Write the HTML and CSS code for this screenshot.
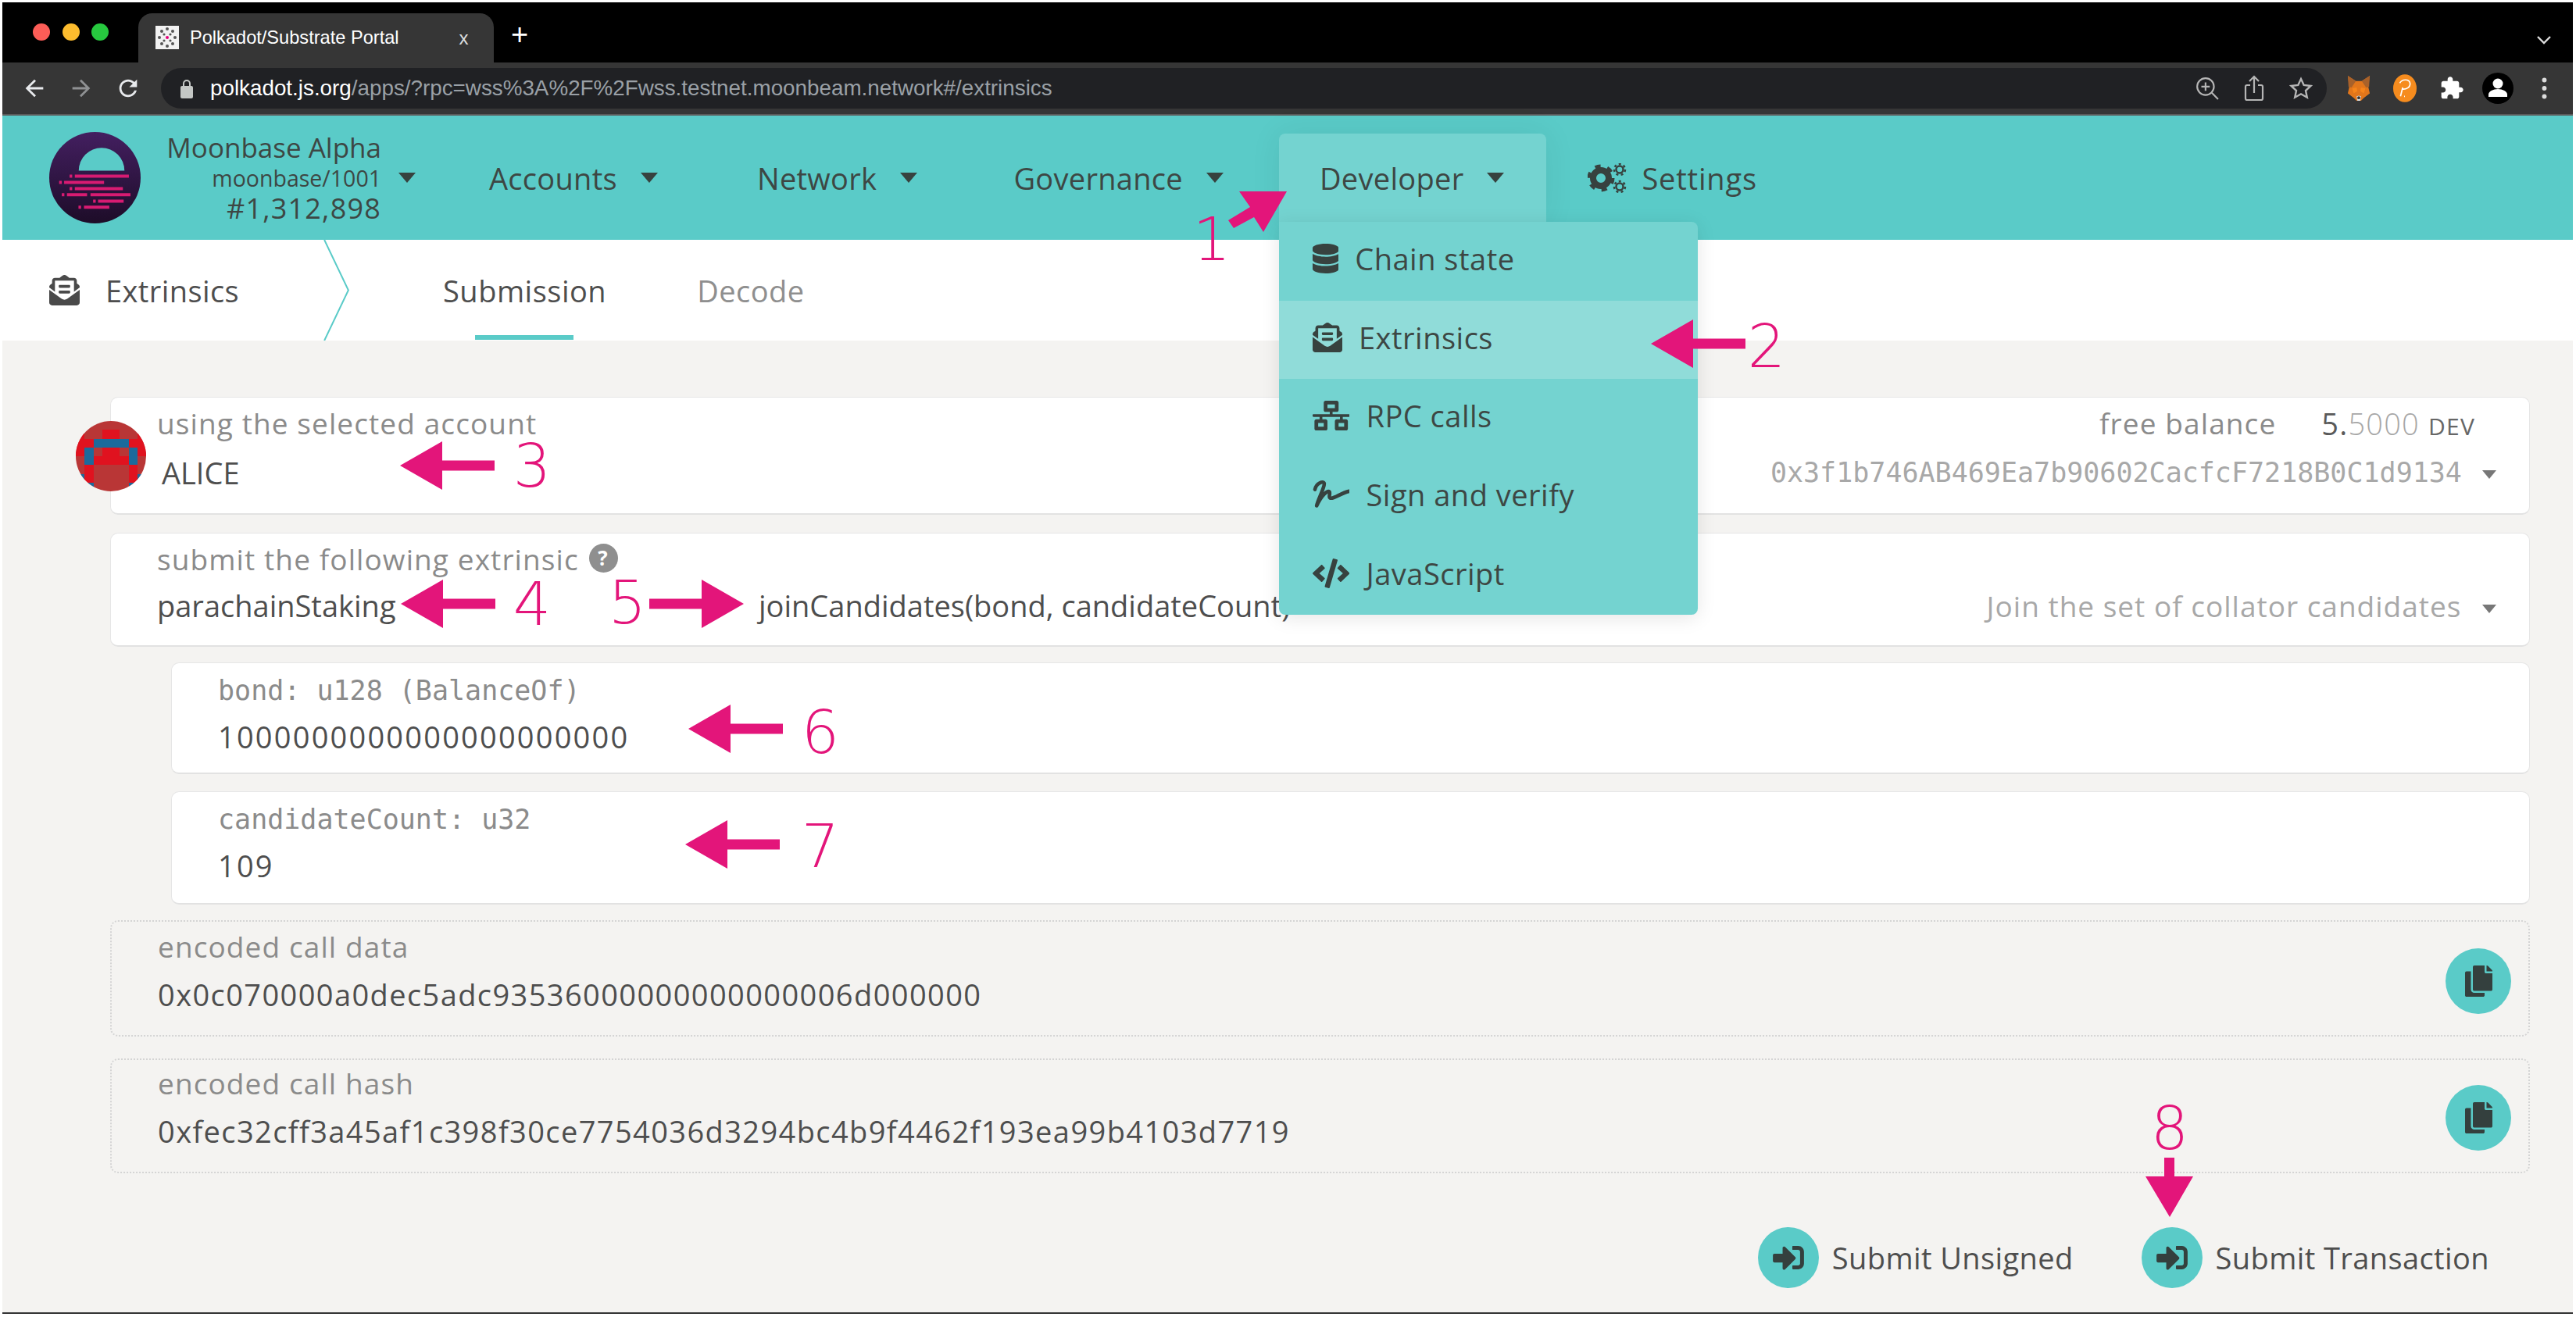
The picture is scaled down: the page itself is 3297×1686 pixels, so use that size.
FILE: index.html
```html
<!DOCTYPE html>
<html>
<head>
    <title>Polkadot/Substrate Portal</title>
    <link rel="stylesheet" href="styles.css">
</head>
<body>
    <div class="window">
        <!-- browser tabs -->
        <div class="tabstrip">
            <div class="lights">
                <span class="light red"></span>
                <span class="light yellow"></span>
                <span class="light green"></span>
            </div>
            <div class="tab">
                <svg class="favicon" viewBox="0 0 30 30">
                    <rect width="30" height="30" fill="#f2f2f2"/>
                    <g fill="#555">
                        <circle cx="15" cy="4" r="2"/><circle cx="15" cy="26" r="2"/>
                        <circle cx="8" cy="7" r="2"/><circle cx="22" cy="7" r="2"/>
                        <circle cx="8" cy="23" r="2"/><circle cx="22" cy="23" r="2"/>
                        <circle cx="5" cy="15" r="2"/><circle cx="25" cy="15" r="2"/>
                        <circle cx="11" cy="11" r="1.6"/><circle cx="19" cy="11" r="1.6"/>
                        <circle cx="11" cy="19" r="1.6"/><circle cx="19" cy="19" r="1.6"/>
                    </g>
                    <circle cx="15" cy="15" r="2" fill="#e6007a"/>
                </svg>
                <span class="tab-title">Polkadot/Substrate Portal</span>
                <span class="tab-close">x</span>
            </div>
            <span class="new-tab">+</span>
            <svg class="tab-list" viewBox="0 0 20 12"><path d="M2 2l8 8 8-8" fill="none" stroke="#ddd" stroke-width="2.4"/></svg>
        </div>

        <!-- browser toolbar -->
        <div class="toolbar">
            <svg class="tool" viewBox="0 0 24 24"><path fill="#e8eaed" d="M20 11H7.83l5.59-5.59L12 4l-8 8 8 8 1.41-1.41L7.83 13H20v-2z"/></svg>
            <svg class="tool" viewBox="0 0 24 24"><path fill="#8f9193" d="M4 11h12.17l-5.59-5.59L12 4l8 8-8 8-1.41-1.41L16.17 13H4v-2z"/></svg>
            <svg class="tool" viewBox="0 0 24 24"><path fill="#e8eaed" d="M17.65 6.35C16.2 4.9 14.21 4 12 4c-4.42 0-7.99 3.58-7.99 8s3.57 8 7.99 8c3.73 0 6.84-2.55 7.73-6h-2.08c-.82 2.33-3.04 4-5.65 4-3.31 0-6-2.69-6-6s2.69-6 6-6c1.66 0 3.14.69 4.22 1.78L13 11h7V4l-2.35 2.35z"/></svg>
            <div class="address">
                <svg class="lock" viewBox="0 0 16 26"><path d="M4 11V7a4 4 0 0 1 8 0v4" fill="none" stroke="#c4c7c5" stroke-width="2"/><rect y="10" width="16" height="16" rx="2" fill="#c4c7c5"/></svg>
                <span class="url"><b>polkadot.js.org</b>/apps/?rpc=wss%3A%2F%2Fwss.testnet.moonbeam.network#/extrinsics</span>
                <div class="address-icons">
                    <svg class="addr-icon" viewBox="0 0 28 28"><g fill="none" stroke="#b5b5b5" stroke-width="2"><circle cx="12" cy="12" r="10"/><path d="M12 7v10M7 12h10M19 19l8 8"/></g></svg>
                    <svg class="addr-icon" viewBox="0 0 28 36"><g fill="none" stroke="#b5b5b5" stroke-width="2.2"><path d="M9 14H5a2 2 0 0 0-2 2v15a2 2 0 0 0 2 2h18a2 2 0 0 0 2-2V16a2 2 0 0 0-2-2h-4"/><path d="M14 24V3M8 9l6-6 6 6"/></g></svg>
                    <svg class="addr-icon" viewBox="0 0 30 30"><path d="M15 3l3.7 8 8.8 1-6.500 6 1.800 8.700L15 22.300l-7.800 4.400L9 18l-6.500-6 8.800-1z" fill="none" stroke="#b5b5b5" stroke-width="2.400"/></svg>
                </div>
            </div>
            <div class="ext-icons">
                <span class="ext-slot">
                    <svg class="ext-fox" viewBox="0 0 32 36">
                        <path d="M1 1l11 7h8l11-7-2 15 2 9-8 6-4 4h-6l-4-4-8-6 2-9z" fill="#e2761b"/>
                        <path d="M1 1l11 7-6 9-4-1zM31 1L20 8l6 9 4-1z" fill="#a8612a"/>
                        <path d="M7 18l6-1 1 5-5 3zM25 18l-6-1-1 5 5 3z" fill="#f6851b"/>
                        <path d="M13 29l3-1 3 1-1 6h-4z" fill="#ddd"/>
                        <circle cx="16" cy="31" r="2" fill="#333"/>
                    </svg>
                </span>
                <span class="ext-slot">
                    <svg class="ext-dot" viewBox="0 0 32 38">
                        <ellipse cx="16" cy="19" rx="16" ry="19" fill="#f68c1e"/>
                        <path d="M10 30l3-12M9 12c3-6 13-6 14 0s-6 9-11 8M15 30h1" fill="none" stroke="#fff" stroke-width="1.800"/>
                    </svg>
                </span>
                <span class="ext-slot">
                    <svg class="ext-puzzle" viewBox="0 0 24 24"><path fill="#fff" d="M20.500 11H19V7c0-1.100-.9-2-2-2h-4V3.500C13 2.120 11.880 1 10.500 1S8 2.120 8 3.500V5H4c-1.100 0-1.990.9-1.990 2v3.800H3.500c1.490 0 2.700 1.210 2.700 2.700s-1.210 2.700-2.700 2.700H2V20c0 1.100.9 2 2 2h3.800v-1.500c0-1.490 1.210-2.700 2.700-2.700 1.490 0 2.700 1.210 2.700 2.700V22H17c1.100 0 2-.9 2-2v-4h1.500c1.380 0 2.500-1.120 2.500-2.500S21.880 11 20.500 11z"/></svg>
                </span>
                <span class="ext-slot">
                    <svg class="ext-profile" viewBox="0 0 40 40">
                        <circle cx="20" cy="20" r="20" fill="#000"/>
                        <circle cx="20" cy="14" r="6.500" fill="#fff"/>
                        <path d="M8 31v-3c0-4 6-7 12-7s12 3 12 7v3z" fill="#fff"/>
                    </svg>
                </span>
                <span class="ext-slot">
                    <svg class="ext-menu" viewBox="0 0 6 24"><circle cx="3" cy="3" r="2.500" fill="#ddd"/><circle cx="3" cy="12" r="2.500" fill="#ddd"/><circle cx="3" cy="21" r="2.500" fill="#ddd"/></svg>
                </span>
            </div>
        </div>

        <!-- app header -->
        <div class="topbar">
            <svg class="chain-logo" viewBox="70 57 350 350">
                <defs>
                    <linearGradient id="logoFill" x1="0" y1="0" x2="0" y2="1">
                        <stop offset="0" stop-color="#431f60"/>
                        <stop offset="1" stop-color="#1d0c28"/>
                    </linearGradient>
                </defs>
                <circle cx="245" cy="232" r="175" fill="url(#logoFill)"/>
                <path d="M183 205a87.500 87.500 0 0 1 175 0z" fill="#5acbc8"/>
                <g stroke="#d81b72" stroke-width="12" stroke-linecap="butt">
                    <path d="M168 226h207M148 226h10M127 250h153M108 250h10M168 274h184M148 274h10M138 297h77M118 297h10M228 297h153M257 322h98M238 322h10M203 345h97M182 345h10"/>
                </g>
            </svg>
            <div class="chain-info">
                <div class="chain-name">Moonbase Alpha</div>
                <div class="chain-spec">moonbase/1001</div>
                <div class="chain-block">#1,312,898</div>
            </div>
            <span class="caret chain-caret"></span>
            <nav class="nav">
                <div class="nav-item">Accounts <span class="caret"></span></div>
                <div class="nav-item">Network <span class="caret"></span></div>
                <div class="nav-item">Governance <span class="caret"></span></div>
                <div class="nav-item active">
                    Developer <span class="caret"></span>
                    <!-- выпадающее меню -->
                    <div class="dropdown">
                        <div class="dropdown-row">
                            <svg class="menu-icon" viewBox="0 0 448 512"><path d="M448 73.143v45.714C448 159.143 347.667 192 224 192S0 159.143 0 118.857V73.143C0 32.857 100.333 0 224 0s224 32.857 224 73.143zM448 176v102.857C448 319.143 347.667 352 224 352S0 319.143 0 278.857V176c48.125 33.143 136.208 48.572 224 48.572S399.874 209.143 448 176zm0 160v102.857C448 479.143 347.667 512 224 512S0 479.143 0 438.857V336c48.125 33.143 136.208 48.572 224 48.572S399.874 369.143 448 336z"/></svg>
                            Chain state
                        </div>
                        <div class="dropdown-row selected">
                            <svg class="menu-icon" viewBox="0 0 512 512"><use href="#envelope"/></svg>
                            Extrinsics
                        </div>
                        <div class="dropdown-row">
                            <svg class="menu-icon" viewBox="0 0 640 512"><path d="M640 264v-16c0-8.840-7.160-16-16-16H344v-40h72c17.670 0 32-14.330 32-32V32c0-17.670-14.330-32-32-32H224c-17.670 0-32 14.330-32 32v128c0 17.670 14.330 32 32 32h72v40H16c-8.840 0-16 7.160-16 16v16c0 8.840 7.160 16 16 16h104v40H64c-17.670 0-32 14.330-32 32v128c0 17.670 14.330 32 32 32h160c17.670 0 32-14.330 32-32V352c0-17.670-14.330-32-32-32h-56v-40h304v40h-56c-17.670 0-32 14.330-32 32v128c0 17.670 14.330 32 32 32h160c17.670 0 32-14.330 32-32V352c0-17.670-14.330-32-32-32h-56v-40h104c8.840 0 16-7.160 16-16zM256 128V64h128v64H256zm-64 320H96v-64h96v64zm352 0h-96v-64h96v64z"/></svg>
                            RPC calls
                        </div>
                        <div class="dropdown-row">
                            <svg class="menu-icon" viewBox="0 0 640 512"><path d="M40 170C60 60 190 10 200 70c8 60-110 280-130 380 90-190 190-270 220-240 20 30-30 110 30 110 70 0 170-90 310-120" fill="none" stroke="#37423f" stroke-width="62" stroke-linecap="round" stroke-linejoin="round"/></svg>
                            Sign and verify
                        </div>
                        <div class="dropdown-row">
                            <svg class="menu-icon" viewBox="0 0 640 512"><path d="M278.900 511.500l-61-17.700c-6.400-1.800-10-8.500-8.200-14.900L346.200 8.700c1.800-6.400 8.500-10 14.900-8.200l61 17.700c6.400 1.800 10 8.500 8.200 14.900L293.800 503.300c-1.900 6.400-8.500 10.100-14.900 8.200zm-114-112.200l43.500-46.400c4.600-4.900 4.300-12.700-.8-17.200L117 256l90.600-79.700c5.100-4.500 5.500-12.300.8-17.200l-43.500-46.400c-4.500-4.800-12.100-5.100-17-.5L3.800 247.200c-5.100 4.700-5.100 12.800 0 17.500l144.100 135.100c4.900 4.600 12.500 4.400 17-.5zm327.200.6l144.100-135.100c5.100-4.700 5.100-12.800 0-17.500L492.100 112.100c-4.800-4.500-12.400-4.300-17 .5L431.600 159c-4.600 4.900-4.300 12.700.8 17.200L523 256l-90.600 79.700c-5.100 4.500-5.500 12.300-.8 17.200l43.500 46.400c4.500 4.900 12.100 5.100 17 .6z"/></svg>
                            JavaScript
                        </div>
                    </div>
                </div>
                <div class="nav-item settings">
                    <svg class="cogs" viewBox="0 0 50 38">
                        <g fill="none" stroke="#37423f">
                            <circle cx="17" cy="19" r="10" stroke-width="8"/>
                            <circle cx="17" cy="19" r="15" stroke-width="5" stroke-dasharray="7 8.700"/>
                            <circle cx="41" cy="8" r="4.500" stroke-width="2.500"/>
                            <circle cx="41" cy="8" r="7" stroke-width="2.500" stroke-dasharray="3 3.300"/>
                            <circle cx="41" cy="30" r="4.500" stroke-width="2.500"/>
                            <circle cx="41" cy="30" r="7" stroke-width="2.500" stroke-dasharray="3 3.300"/>
                        </g>
                    </svg>
                    Settings
                </div>
            </nav>
        </div>

        <!-- sub navigation -->
        <div class="subnav">
            <div class="subnav-title">
                <svg class="title-icon" viewBox="0 0 512 512">
                    <defs>
                        <path id="envelope" d="M176 216h160c8.840 0 16-7.160 16-16v-16c0-8.840-7.160-16-16-16H176c-8.840 0-16 7.160-16 16v16c0 8.840 7.160 16 16 16zm-16 80c0 8.840 7.160 16 16 16h160c8.840 0 16-7.160 16-16v-16c0-8.840-7.160-16-16-16H176c-8.840 0-16 7.160-16 16v16zm96 121.130c-16.420 0-32.840-5.060-46.860-15.190L0 250.860V464c0 26.510 21.490 48 48 48h416c26.510 0 48-21.490 48-48V250.860L302.860 401.940c-14.020 10.120-30.440 15.190-46.860 15.190zm237.610-254.180c-8.850-6.940-17.240-13.470-29.610-22.810V96c0-26.510-21.490-48-48-48h-77.550c-3.040-2.200-5.870-4.260-9.040-6.560C312.600 29.170 279.200-.35 256 0c-23.200-.35-56.590 29.170-73.410 41.440-3.170 2.300-6 4.360-9.040 6.560H96c-26.510 0-48 21.490-48 48v44.140c-12.370 9.330-20.760 15.870-29.610 22.810A47.995 47.995 0 0 0 0 200.720v10.650l96 69.350V96h320v184.720l96-69.350v-10.650c0-14.740-6.780-28.670-18.390-37.770z"/>
                    </defs>
                    <use href="#envelope"/>
                </svg>
                Extrinsics
            </div>
            <svg class="crumb" viewBox="0 0 34 130"><path d="M1 0l31 65L1 130" fill="none" stroke="#5acbc8" stroke-width="2"/></svg>
            <div class="subnav-tab current">Submission</div>
            <div class="subnav-tab">Decode</div>
        </div>

        <!-- main form -->
        <div class="content">
            <div class="card account-card">
                <svg class="avatar" viewBox="0 0 8 8" shape-rendering="crispEdges">
                    <rect width="8" height="8" fill="#b93636"/>
                    <path fill="#e0121f" d="M0 1h1v1H0zM3 1h2v1H3zM7 1h1v1H7zM0 2h2v1H0zM6 2h2v1H6zM0 3h1v1H0zM3 3h2v1H3zM7 3h1v1H7zM2 4h4v1H2zM1 5h1v2H1zM6 5h1v2H6z"/>
                    <path fill="#1c6a9c" d="M2 2h4v1H2zM1 3h1v2H1zM6 3h1v2H6zM0 6h1v1H0zM7 6h1v1H7zM0 7h2v1H0zM6 7h2v1H6z"/>
                </svg>
                <div class="card-row">
                    <span class="label">using the selected account</span>
                    <span class="balance"><span class="label">free balance</span><span class="amount">5.<i>5000</i> <small>DEV</small></span></span>
                </div>
                <div class="card-row value-row">
                    <span class="value alice">ALICE</span>
                    <span class="hint mono">0x3f1b746AB469Ea7b90602CacfcF7218B0C1d9134 <span class="caret small"></span></span>
                </div>
            </div>

            <div class="card extrinsic-card">
                <div class="card-row">
                    <span class="label">submit the following extrinsic <span class="help">?</span></span>
                </div>
                <div class="card-row value-row">
                    <span class="value"><span class="section">parachainStaking</span><span class="method">joinCandidates(bond, candidateCount)</span></span>
                    <span class="hint">Join the set of collator candidates <span class="caret small"></span></span>
                </div>
            </div>

            <div class="card param-card">
                <div class="mono-label">bond: u128 (BalanceOf)</div>
                <div class="value digits">1000000000000000000000</div>
            </div>

            <div class="card param-card second">
                <div class="mono-label">candidateCount: u32</div>
                <div class="value digits">109</div>
            </div>

            <div class="output">
                <div>
                    <div class="label">encoded call data</div>
                    <div class="value output-value">0x0c070000a0dec5adc93536000000000000006d000000</div>
                </div>
                <span class="round copy"><svg class="copy-icon" viewBox="0 0 448 512"><use href="#copy"/></svg></span>
            </div>

            <div class="output last">
                <div>
                    <div class="label">encoded call hash</div>
                    <div class="value output-value">0xfec32cff3a45af1c398f30ce7754036d3294bc4b9f4462f193ea99b4103d7719</div>
                </div>
                <span class="round copy"><svg class="copy-icon" viewBox="0 0 448 512"><path id="copy" d="M320 448v40c0 13.255-10.745 24-24 24H24c-13.255 0-24-10.745-24-24V120c0-13.255 10.745-24 24-24h72v296c0 30.879 25.121 56 56 56h168zm0-344V0H152c-13.255 0-24 10.745-24 24v368c0 13.255 10.745 24 24 24h272c13.255 0 24-10.745 24-24V128H344c-13.200 0-24-10.800-24-24zm120.971-31.029L375.029 7.029A24 24 0 0 0 358.059 0H352v96h96v-6.059a24 24 0 0 0-7.029-16.970z"/></svg></span>
            </div>

            <div class="actions">
                <div class="action">
                    <span class="round"><svg class="submit-icon" viewBox="0 50 512 412"><use href="#signin"/></svg></span>
                    Submit Unsigned
                </div>
                <div class="action">
                    <span class="round"><svg class="submit-icon" viewBox="0 50 512 412"><path id="signin" d="M416 448h-84c-6.600 0-12-5.400-12-12v-40c0-6.600 5.400-12 12-12h84c17.700 0 32-14.300 32-32V160c0-17.700-14.300-32-32-32h-84c-6.600 0-12-5.400-12-12V76c0-6.600 5.400-12 12-12h84c53 0 96 43 96 96v192c0 53-43 96-96 96zm-47-201L201 79c-15-15-41-4.500-41 17v96H24c-13.300 0-24 10.700-24 24v96c0 13.300 10.700 24 24 24h136v96c0 21.500 26 32 41 17l168-168c9.300-9.400 9.300-24.600 0-34z"/></svg></span>
                    Submit Transaction
                </div>
            </div>
        </div>
    </div>

    <!-- annotations drawn over the screenshot -->
    <svg class="annotations" viewBox="0 0 3297 1686">
        <defs>
            <polygon id="arrow" points="0,0 54,-31 54,-6.500 121,-6.500 121,6.500 54,6.500 54,31"/>
        </defs>
        <polygon points="1586,245 1647,245 1617,297 1605,278 1579,292 1572,282 1600,265"/>
        <use href="#arrow" x="2113" y="440"/>
        <use href="#arrow" x="512" y="596"/>
        <use href="#arrow" x="513" y="773"/>
        <use href="#arrow" transform="translate(952 773) rotate(180)"/>
        <use href="#arrow" x="881" y="933"/>
        <use href="#arrow" x="877" y="1081"/>
        <polygon points="2770,1482 2783,1482 2783,1506 2807,1506 2777,1558 2746,1506 2770,1506"/>
        <text x="1551" y="333">1</text>
        <text x="2261" y="470">2</text>
        <text x="681" y="623">3</text>
        <text x="681" y="800">4</text>
        <text x="803" y="798">5</text>
        <text x="1050" y="964">6</text>
        <text x="1050" y="1110">7</text>
        <text x="2777" y="1471">8</text>
    </svg>
</body>
</html>
```

FILE: styles.css
```css
/* page */
html, body {
    margin: 0;
    height: 1686px;
    overflow: hidden;
    background: #fff;
}
body {
    position: relative;
    font-family: "Open Sans", "Noto Sans", sans-serif;
    color: #4e4e4e;
}
svg {
    display: block;
    flex: none;
}
.window {
    margin: 3px 4px 0 3px;
    height: 1679px;
    display: flex;
    flex-direction: column;
    background: #f4f3f1;
    border-bottom: 2px solid #333;
    box-sizing: border-box;
    overflow: hidden;
}

/* browser tabs */
.tabstrip {
    height: 77px;
    flex: none;
    display: flex;
    align-items: flex-start;
    background: #000;
    font-family: "Liberation Sans", Arial, sans-serif;
}
.lights {
    display: flex;
    gap: 15.5px;
    margin: 27px 0 0 39px;
}
.light {
    width: 22px;
    height: 22px;
    border-radius: 50%;
}
.red { background: #fc5d57; }
.yellow { background: #fdbc2e; }
.green { background: #27c93f; }
.tab {
    width: 433px;
    height: 63px;
    margin: 14px 0 0 38px;
    padding-left: 22px;
    display: flex;
    align-items: center;
    background: #363636;
    border-radius: 18px 18px 0 0;
    color: #fff;
}
.favicon {
    width: 30px;
    height: 30px;
    margin-top: -2px;
}
.tab-title {
    margin-left: 14px;
    font-size: 23.6px;
    white-space: nowrap;
}
.tab-close {
    margin-left: 77px;
    font-size: 24px;
    color: #ddd;
}
.new-tab {
    margin: 22px 0 0 22px;
    font-size: 38px;
    line-height: 38px;
    color: #fff;
}
.tab-list {
    width: 20px;
    height: 12px;
    margin: 42px 27px 0 auto;
}

/* browser toolbar */
.toolbar {
    height: 68px;
    flex: none;
    box-sizing: border-box;
    padding-left: 24px;
    display: flex;
    align-items: center;
    gap: 26px;
    background: #363636;
    border-bottom: 2px solid #5b5b5b;
}
.tool {
    width: 34px;
    height: 34px;
}
.address {
    flex: none;
    width: 2772px;
    height: 52px;
    margin-left: -1px;
    padding: 0 18px 0 25px;
    box-sizing: border-box;
    display: flex;
    align-items: center;
    background: #202124;
    border-radius: 26px;
    font-family: "Liberation Sans", Arial, sans-serif;
}
.lock {
    width: 16px;
    height: 26px;
}
.url {
    margin-left: 22px;
    font-size: 27.8px;
    color: #9aa0a6;
    white-space: nowrap;
}
.url b {
    font-weight: 400;
    color: #fff;
}
.address-icons {
    margin-left: auto;
    display: flex;
    align-items: center;
    gap: 30px;
}
.addr-icon {
    width: 30px;
    height: 36px;
}
.ext-icons {
    flex: none;
    display: flex;
    margin-left: -15px;
}
.ext-slot {
    flex: none;
    width: 59.5px;
    display: flex;
    justify-content: center;
    align-items: center;
}
.ext-fox { width: 30px; height: 36px; }
.ext-dot { width: 30px; height: 38px; }
.ext-puzzle { width: 32px; height: 32px; }
.ext-profile { width: 40px; height: 40px; }
.ext-menu { width: 7px; height: 28px; }

/* app header */
.topbar {
    height: 159px;
    flex: none;
    display: flex;
    align-items: center;
    background: #5acbc8;
    color: #3d4744;
}
.chain-logo {
    width: 117px;
    height: 117px;
    margin-left: 60px;
}
.chain-info {
    width: 308px;
    text-align: right;
    white-space: nowrap;
}
.chain-name {
    font-size: 35px;
    line-height: 40px;
}
.chain-spec {
    font-size: 28.500px;
    line-height: 38px;
}
.chain-block {
    font-size: 36px;
    letter-spacing: 1.2px;
    line-height: 40px;
}
.caret {
    display: inline-block;
    width: 0;
    height: 0;
    margin-left: 20px;
    vertical-align: middle;
    border-style: solid;
    border-width: 13px 11px 0;
    border-color: #37423f transparent transparent;
}
.caret.small {
    margin-left: 16px;
    border-width: 11px 9px 0;
    border-color: #777 transparent transparent;
}
.mono .caret.small {
    margin-left: 5px;
}
.chain-caret {
    margin-left: 22px;
}
.nav {
    display: flex;
    align-items: stretch;
    gap: 17px;
    margin-left: 42px;
    height: 159px;
}
.nav-item {
    position: relative;
    padding: 0 54px 0 52px;
    display: flex;
    align-items: center;
    font-size: 38px;
    letter-spacing: 0.3px;
    white-space: nowrap;
}
.nav-item:first-child {
    padding-right: 58px;
}
.nav-item .caret {
    margin-left: 30px;
}
.nav-item.active {
    margin-top: 23px;
    height: 113px;
    box-sizing: border-box;
    background: #74d3d0;
    border-radius: 8px 8px 0 0;
    box-shadow: 0 0 40px rgba(0, 0, 0, .07);
}
.nav-item.settings {
    padding-left: 36px;
    letter-spacing: 0.8px;
}
.cogs {
    width: 50px;
    height: 38px;
    margin-right: 19px;
}
.dropdown {
    position: absolute;
    z-index: 5;
    top: 113px;
    left: 0;
    width: 536px;
    height: 503px;
    display: flex;
    flex-direction: column;
    background: #74d3d0;
    border-radius: 0 8px 8px 8px;
    box-shadow: 0 4px 24px rgba(0, 0, 0, .1);
    font-size: 38px;
    letter-spacing: 0.5px;
}
.dropdown-row {
    flex: 1;
    padding: 0 0 6px 43px;
    display: flex;
    align-items: center;
    gap: 21px;
}
.dropdown-row.selected {
    background: #90dcd9;
}
.menu-icon {
    height: 38px;
    fill: #37423f;
}

/* sub navigation */
.subnav {
    height: 129px;
    flex: none;
    display: flex;
    align-items: center;
    background: #fff;
}
.subnav-title {
    width: 411px;
    padding-left: 60px;
    box-sizing: border-box;
    display: flex;
    align-items: center;
    gap: 33px;
    font-size: 38px;
    letter-spacing: 0.4px;
}
.title-icon {
    width: 39px;
    height: 39px;
    fill: #4a4a4a;
}
.crumb {
    width: 34px;
    height: 129px;
    margin-right: 119px;
}
.subnav-tab {
    position: relative;
    margin-right: 116px;
    font-size: 38px;
    letter-spacing: 0.5px;
    color: #8f8f8f;
}
.subnav-tab.current {
    color: #4e4e4e;
}
.subnav-tab.current::after {
    content: "";
    position: absolute;
    left: 41px;
    right: 42px;
    bottom: -37px;
    height: 6px;
    background: #5acbc8;
}

/* main form */
.content {
    flex: 1;
    padding: 72px 55px 0 138px;
}
.card {
    position: relative;
    box-sizing: border-box;
    padding: 13px 42px 0 59px;
    background: #fff;
    border: 1px solid #e6e6e6;
    border-bottom: 2px solid #e2e2e2;
    border-radius: 10px;
}
.account-card {
    height: 151px;
    margin-bottom: 23px;
}
.extrinsic-card {
    height: 146px;
    margin-bottom: 20px;
}
.param-card {
    height: 143px;
    margin: 0 0 22px 78px;
}
.param-card.second {
    height: 145px;
    margin-bottom: 20px;
}
.avatar {
    position: absolute;
    top: 30px;
    left: -45px;
    width: 90px;
    height: 90px;
    border-radius: 50%;
}
.card-row {
    height: 40px;
    display: flex;
    align-items: center;
    justify-content: space-between;
    white-space: nowrap;
}
.value-row {
    margin-top: 19px;
}
.account-card .value-row {
    margin-top: 23px;
}
.label {
    font-size: 37px;
    letter-spacing: 1.1px;
    line-height: 40px;
    color: #8b8b8b;
}
.value {
    font-size: 38px;
    color: #4e4e4e;
}
.alice {
    margin-left: 6px;
}
.section {
    display: inline-block;
    width: 770px;
}
.hint {
    font-size: 37px;
    letter-spacing: 1px;
    color: #a8a8a8;
}
.mono {
    font-family: "DejaVu Sans Mono", monospace;
    font-size: 35px;
    letter-spacing: 0;
}
.balance {
    display: flex;
    align-items: center;
    gap: 58px;
    margin-right: 27px;
}
.amount {
    font-size: 38px;
    letter-spacing: 1.2px;
    color: #5a5a5a;
}
.amount i {
    font-style: normal;
    font-weight: 300;
    color: #a8a8a8;
}
.amount small {
    font-size: 30px;
    color: #666;
}
.help {
    display: inline-block;
    width: 37px;
    height: 37px;
    line-height: 37px;
    margin-left: 2px;
    border-radius: 50%;
    background: #8f8f8f;
    color: #fff;
    font-size: 26px;
    font-weight: 700;
    text-align: center;
    vertical-align: top;
}
.mono-label {
    font-family: "DejaVu Sans Mono", monospace;
    font-size: 35px;
    line-height: 44px;
    color: #8b8b8b;
}
.digits {
    margin-top: 15px;
    line-height: 44px;
    letter-spacing: 2.2px;
}
.output {
    height: 149px;
    margin-bottom: 28px;
    padding: 12px 22px 0 59px;
    box-sizing: border-box;
    display: flex;
    justify-content: space-between;
    border: 2px dotted #d4d4d4;
    border-radius: 10px;
}
.output.last {
    height: 147px;
    margin-bottom: 0;
    padding-top: 10px;
}
.output-value {
    margin-top: 19px;
    line-height: 44px;
    letter-spacing: 1.4px;
}
.round {
    flex: none;
    width: 78px;
    height: 78px;
    display: flex;
    align-items: center;
    justify-content: center;
    border-radius: 50%;
    background: #5acbc8;
}
.round.copy {
    width: 84px;
    height: 84px;
    margin-top: 22px;
}
.copy-icon {
    width: 35px;
    height: 40px;
    fill: #34403e;
}
.submit-icon {
    width: 40px;
    height: 32px;
    fill: #34403e;
}
.actions {
    display: flex;
    justify-content: flex-end;
    gap: 87px;
    margin: 69px 52px 0 0;
}
.action {
    display: flex;
    align-items: center;
    gap: 17px;
    font-size: 38px;
    letter-spacing: 0.4px;
    white-space: nowrap;
}

/* annotations */
.annotations {
    position: absolute;
    top: 0;
    left: 0;
    width: 3297px;
    height: 1686px;
    z-index: 10;
    fill: #e3157a;
    pointer-events: none;
}
.annotations text {
    font-family: "DejaVu Sans", sans-serif;
    font-size: 76px;
    font-weight: 200;
    text-anchor: middle;
}
```
